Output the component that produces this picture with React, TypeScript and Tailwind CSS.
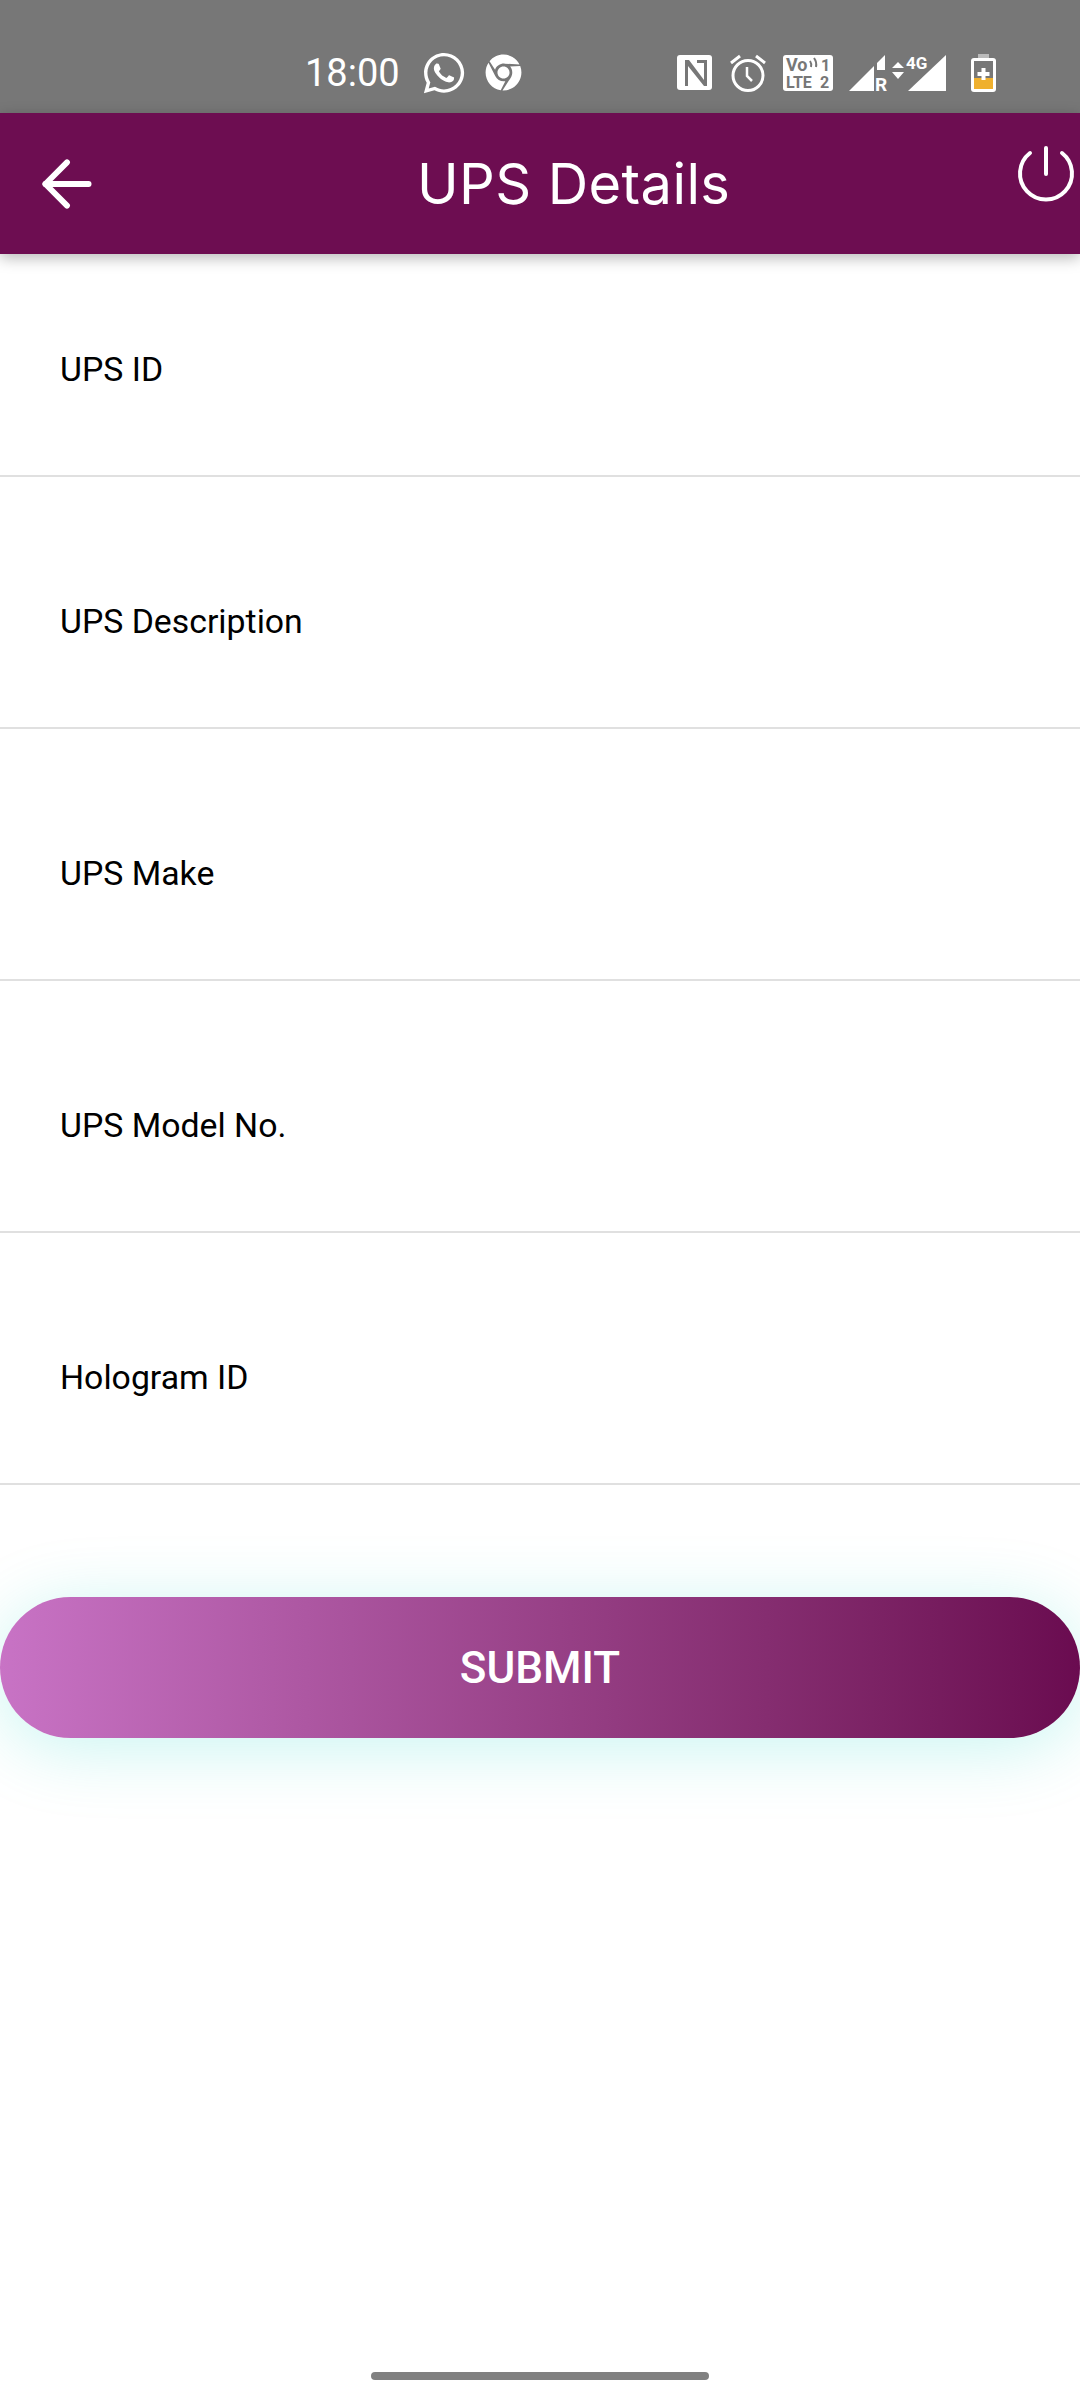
import { ArrowLeft } from "lucide-react";
import { FaChrome, FaWhatsapp } from "react-icons/fa";

const FIELDS = ["UPS Description", "UPS Make", "UPS Model No.", "Hologram ID"];

function NfcIcon() {
  return (
    <svg width="35" height="35" viewBox="0 0 35 35" className="ml-[155px]">
      <rect width="35" height="35" rx="3" fill="#fff" />
      <path d="M8 5h4l15 20V8h-7V5h10v26h-3L11 11v20H8z" fill="#777" />
    </svg>
  );
}

function AlarmIcon() {
  return (
    <svg width="36" height="38" viewBox="0 0 36 38" fill="none" stroke="#fff" className="ml-[18px]">
      <circle cx="18" cy="21.5" r="15" strokeWidth="3" />
      <path d="M17 13v9l5 5" strokeWidth="2.5" />
      <path d="M1 9l9-7M35 9l-9-7" strokeWidth="3" />
    </svg>
  );
}

function VolteIcon() {
  return (
    <svg width="50" height="36" viewBox="0 0 50 36" className="ml-[17px]">
      <rect width="50" height="36" rx="3" fill="#fff" />
      <g fill="#777" fontFamily="Roboto, sans-serif" fontWeight="700">
        <text x="3" y="16" fontSize="18">Vo</text>
        <text x="3" y="33" fontSize="16">LTE</text>
        <text x="38" y="16" fontSize="16">1</text>
        <text x="37" y="33" fontSize="16">2</text>
      </g>
      <path d="M27 6q2 3 1 6M31 3q3 4 2 9" stroke="#777" strokeWidth="2" fill="none" />
    </svg>
  );
}

function SignalGroup() {
  return (
    <svg width="97" height="38" viewBox="0 0 97 38" className="ml-[16px]">
      <path d="M0 37L25 12v25z" fill="#fff" />
      <path d="M28 9l8-8v15h-8z" fill="#fff" />
      <text x="26" y="37" fontSize="19" fontWeight="700" fill="#fff" fontFamily="Roboto, sans-serif">R</text>
      <path d="M43 14l6-6 6 6zM43 18l6 7 6-7z" fill="#fff" />
      <text x="57" y="15" fontSize="17" fontWeight="700" fill="#fff" fontFamily="Roboto, sans-serif">4G</text>
      <path d="M59 37L97 1v36z" fill="#fff" />
    </svg>
  );
}

function BatteryIcon() {
  return (
    <svg width="25" height="38" viewBox="0 0 25 38" className="ml-[25px]">
      <rect x="7" y="0" width="11" height="4" fill="#bbb" />
      <rect x="0" y="4" width="25" height="34" rx="3" fill="#fff" />
      <rect x="3" y="7" width="19" height="28" fill="#777" />
      <rect x="3" y="24" width="19" height="11" fill="#efb02e" />
      <path d="M10.5 14h4v4h4v4h-4v4h-4v-4h-4v-4h4z" fill="#fff" />
    </svg>
  );
}

function PowerIcon() {
  return (
    <svg
      width="60"
      height="62"
      viewBox="0 0 60 62"
      fill="none"
      stroke="#fff"
      strokeWidth="4"
      strokeLinecap="round"
      className="absolute right-[4px] top-[31px]"
    >
      <path d="M14 9A26 26 0 1 0 46 9" />
      <path d="M30 4V30" />
    </svg>
  );
}

function StatusBar() {
  return (
    <div className="flex h-[113px] items-center bg-[#777777] pl-[305px] pt-[32px] text-white">
      <span className="font-['Roboto',sans-serif] text-[38px] font-[450] leading-none">18:00</span>
      <FaWhatsapp className="ml-[21px] text-[46px]" />
      <FaChrome className="ml-[18px] text-[37px]" />
      <NfcIcon />
      <AlarmIcon />
      <VolteIcon />
      <SignalGroup />
      <BatteryIcon />
    </div>
  );
}

function Header() {
  return (
    <div className="relative flex h-[141px] items-center bg-[#6d0d51] pl-[30px] text-white shadow-[0_4px_14px_rgba(0,0,0,0.28)]">
      <ArrowLeft size={74} strokeWidth={1.9} />
      <h1 className="ml-[313px] font-['Inter',sans-serif] text-[56px] font-normal leading-none tracking-[0.4px]">
        UPS Details
      </h1>
      <PowerIcon />
    </div>
  );
}

function FieldRow({ label, first }: { label: string; first?: boolean }) {
  return (
    <div
      className={`flex items-end border-b-2 border-[#e0e0e0] pb-[85px] pl-[60px] ${first ? "h-[223px]" : "h-[252px]"}`}
    >
      <span className="font-['Roboto',sans-serif] text-[33.8px] leading-[40px] text-black">{label}</span>
    </div>
  );
}

export default function App() {
  return (
    <div className="flex h-[2400px] w-[1080px] flex-col bg-white">
      <StatusBar />
      <Header />
      <FieldRow label="UPS ID" first />
      {FIELDS.map((label) => (
        <FieldRow key={label} label={label} />
      ))}
      <button className="mt-[112px] flex h-[141px] w-full items-center justify-center rounded-[71px] bg-gradient-to-r from-[#c873c5] to-[#6a0b50] font-['Roboto',sans-serif] text-[44px] font-medium text-white shadow-[0_10px_70px_rgba(0,210,190,0.22)]">
        SUBMIT
      </button>
      <div className="mx-auto mt-[634px] h-[8px] w-[338px] rounded-full bg-[#808080]" />
    </div>
  );
}
